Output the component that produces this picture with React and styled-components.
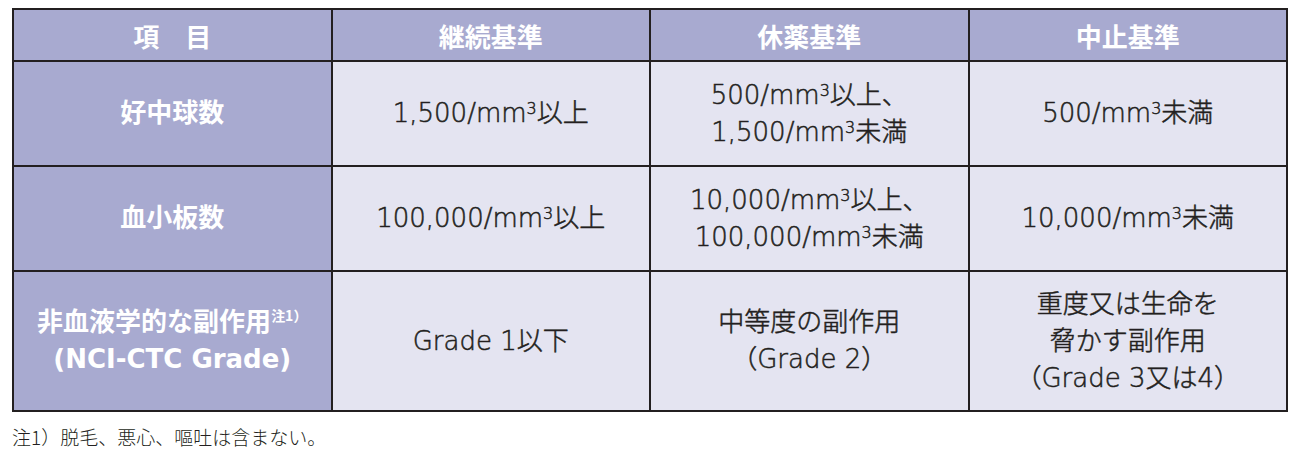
import React from 'react';
import styled, { createGlobalStyle } from 'styled-components';

const GlobalStyle = createGlobalStyle`
  body {
    margin: 0;
    background: #ffffff;
    font-family: "DejaVu Sans", "Noto Sans CJK JP", sans-serif;
    color: #231f20;
  }
`;

const Page = styled.main`
  padding: 8px 0 0 12px;
`;

const CriteriaTable = styled.table`
  width: 1276px;
  border-collapse: collapse;
  table-layout: fixed;
  border: 2px solid #231f20;
`;

const HeadCell = styled.th`
  height: 50px;
  padding: 0;
  background: #a8aad0;
  border: 2px solid #231f20;
  color: #ffffff;
  font-family: "Noto Sans CJK JP", sans-serif;
  font-size: 26px;
  font-weight: 700;
  text-align: center;
  vertical-align: middle;
`;

const RowLabel = styled.th`
  height: ${props => props.$height - 2}px;
  padding: 0;
  background: #a8aad0;
  border: 2px solid #231f20;
  color: #ffffff;
  font-family: "DejaVu Sans", "Noto Sans CJK JP", sans-serif;
  font-size: 26px;
  font-weight: 700;
  line-height: 37px;
  text-align: center;
  vertical-align: middle;
`;

// 本文セル（細めの書体に少しだけ線を足す）
const DataCell = styled.td`
  height: ${props => props.$height - 2}px;
  padding: 0;
  background: #e4e4f1;
  border: 2px solid #231f20;
  color: #231f20;
  font-size: 26px;
  font-weight: 200;
  -webkit-text-stroke: 0.5px #231f20;
  line-height: 37px;
  text-align: center;
  vertical-align: middle;
`;

const Sup = styled.span`
  font-size: 16px;
  vertical-align: 8px;
  line-height: 0;
`;

const Note = styled.span`
  font-family: "Noto Sans CJK JP", sans-serif;
  font-size: 14px;
  vertical-align: 10px;
  line-height: 0;
`;

const FootNote = styled.p`
  margin: 13px 0 0;
  font-family: "Noto Sans CJK JP", sans-serif;
  font-size: 19px;
  font-weight: 300;
  line-height: 24px;
  color: #231f20;
`;

// 表のデータ
const rows = [
  {
    label: <>好中球数</>,
    cells: [
      <>1,500/mm<Sup>3</Sup>以上</>,
      <>500/mm<Sup>3</Sup>以上、<br />1,500/mm<Sup>3</Sup>未満</>,
      <>500/mm<Sup>3</Sup>未満</>,
    ],
    height: 105,
  },
  {
    label: <>血小板数</>,
    cells: [
      <>100,000/mm<Sup>3</Sup>以上</>,
      <>10,000/mm<Sup>3</Sup>以上、<br />100,000/mm<Sup>3</Sup>未満</>,
      <>10,000/mm<Sup>3</Sup>未満</>,
    ],
    height: 105,
  },
  {
    label: (
      <>
        非血液学的な副作用<Note>注1）</Note>
        <br />
        (NCI-CTC Grade)
      </>
    ),
    cells: [
      <>Grade 1以下</>,
      <>中等度の副作用<br />（Grade 2）</>,
      <>重度又は生命を<br />脅かす副作用<br />（Grade 3又は4）</>,
    ],
    height: 140,
  },
];

const App = () => {
  return (
    <Page>
      <GlobalStyle />
      <CriteriaTable>
        <thead>
          <tr>
            <HeadCell>項　目</HeadCell>
            <HeadCell>継続基準</HeadCell>
            <HeadCell>休薬基準</HeadCell>
            <HeadCell>中止基準</HeadCell>
          </tr>
        </thead>
        <tbody>
          {rows.map((row, i) => (
            <tr key={i}>
              <RowLabel $height={row.height}>{row.label}</RowLabel>
              {row.cells.map((cell, j) => (
                <DataCell key={j} $height={row.height}>
                  {cell}
                </DataCell>
              ))}
            </tr>
          ))}
        </tbody>
      </CriteriaTable>
      <FootNote>注1）脱毛、悪心、嘔吐は含まない。</FootNote>
    </Page>
  );
};

export default App;
